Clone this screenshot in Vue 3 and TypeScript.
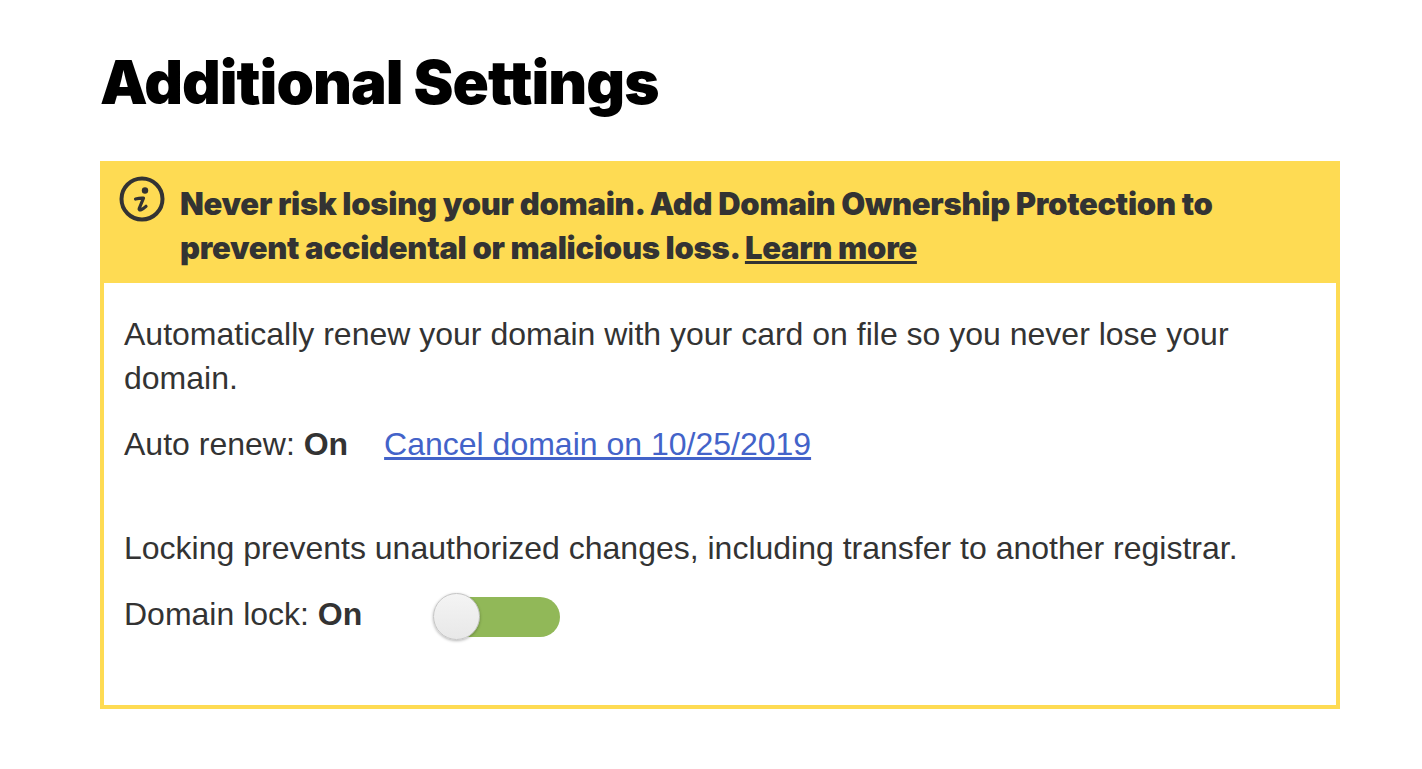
<script setup lang="ts">
const expiry = '10/25/2019'
</script>

<template>
  <div class="page">
    <h1 class="title">Additional Settings</h1>
    <section class="panel">
      <div class="banner">
        <svg class="info" viewBox="0 0 46 46" width="46" height="46">
          <circle cx="23" cy="23" r="20.500" fill="none" stroke="#333" stroke-width="4" />
          <circle cx="26" cy="14.500" r="3.200" fill="#333" />
          <path d="M16.500 23c2.500-.6 5.500-1 8-.8l-4.300 10.300c-.4 1.300.6 1.800 1.800 1.200 1.700-.8 3.500-2 5-3.400" fill="none" stroke="#333" stroke-width="3.200" stroke-linecap="round" stroke-linejoin="round" />
        </svg>
        <p class="banner-text">
          Never risk losing your domain. Add Domain Ownership Protection to prevent accidental or malicious loss.
          <a class="banner-link" href="#">Learn more</a>
        </p>
      </div>
      <div class="content">
        <p class="line">Automatically renew your domain with your card on file so you never lose your domain.</p>
        <p class="line status">
          <span>Auto renew: <b>On</b></span>
          <a class="cancel" href="#">Cancel domain on {{ expiry }}</a>
        </p>
        <p class="line lock-desc">Locking prevents unauthorized changes, including transfer to another registrar.</p>
        <div class="line status lock-row">
          <span>Domain lock: <b>On</b></span>
          <span class="toggle"><span class="knob" /></span>
        </div>
      </div>
    </section>
  </div>
</template>

<style scoped>
.page {
  width: 1240px;
  padding: 42px 0 0 100px;
  font-family: "Liberation Sans", Arial, sans-serif;
  color: #333;
}
.title {
  margin: 0 0 38px;
  font-family: Inter, sans-serif;
  font-weight: 900;
  font-size: 60px;
  line-height: 81px;
  letter-spacing: -0.95px;
  color: #000;
}
.panel {
  border: 4px solid #fedb53;
  border-top: 0;
  height: 548px;
  box-sizing: border-box;
}
.banner {
  background: #fedb53;
  margin: 0 -4px;
  height: 122px;
  box-sizing: border-box;
  padding: 15px 20px 0 19px;
  display: flex;
  gap: 15px;
}
.info {
  flex: none;
}
.banner-text {
  margin: 6px 0 0;
  font-family: Inter, sans-serif;
  font-weight: 900;
  font-size: 31px;
  line-height: 44px;
  letter-spacing: -0.28px;
  width: 1060px;
}
.banner-link {
  color: #333;
  text-decoration: underline;
}
.content {
  padding: 29px 20px 0;
}
.line {
  margin: 0;
  font-size: 32px;
  line-height: 44px;
}
.status {
  display: flex;
  align-items: center;
  margin-top: 22px;
}
.cancel {
  color: #4363c9;
  margin-left: 36px;
}
.lock-desc {
  margin-top: 60px;
}
.lock-row {
  margin-top: 21px;
}
.toggle {
  position: relative;
  margin: 6px 0 0 72px;
  width: 126px;
  height: 40px;
  border-radius: 20px;
  background: #91b858;
  display: block;
}
.knob {
  position: absolute;
  left: -1px;
  top: -4px;
  width: 45px;
  height: 45px;
  border-radius: 50%;
  background: linear-gradient(#f4f4f4, #e8e8e8);
  border: 1px solid #c4c4c4;
  box-shadow: 0 1px 3px rgba(0, 0, 0, 0.3);
}
</style>
